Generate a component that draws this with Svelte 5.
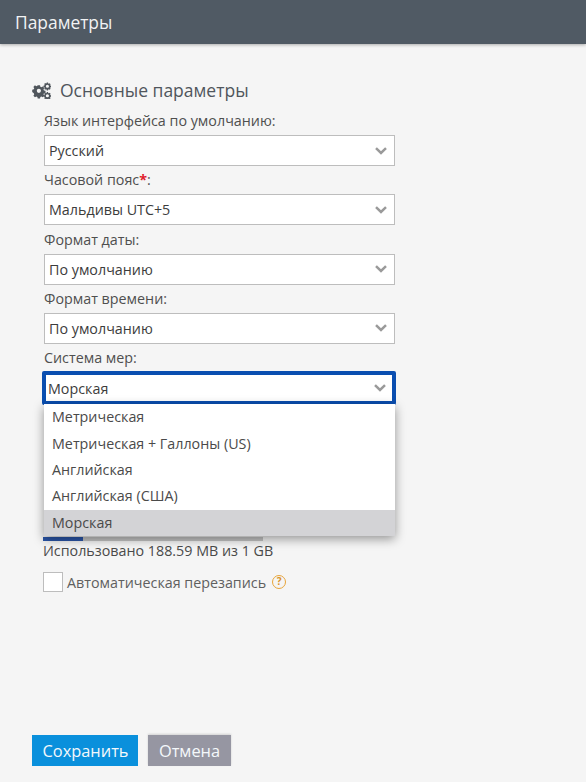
<script>
  const fields = [
    { label: 'Язык интерфейса по умолчанию:', value: 'Русский' },
    { label: 'Часовой пояс', required: true, value: 'Мальдивы UTC+5' },
    { label: 'Формат даты:', value: 'По умолчанию' },
    { label: 'Формат времени:', value: 'По умолчанию' },
    { label: 'Система мер:', value: 'Морская', open: true }
  ]
  const options = ['Метрическая', 'Метрическая + Галлоны (US)', 'Английская', 'Английская (США)', 'Морская']
</script>

<div class="page">
  <header class="topbar">Параметры</header>

  <main class="content">
    <h2 class="section-title">
      <svg class="gears" viewBox="0 0 18 16" width="19" height="17">
        <g fill="#50565c">
          <path fill-rule="evenodd" d="M5.4 3h2.2l.3 1.5 1 .4 1.3-.8 1.5 1.5-.8 1.3.4 1 1.5.3v2.2l-1.5.3-.4 1 .8 1.3-1.5 1.5-1.3-.8-1 .4-.3 1.5H5.4l-.3-1.5-1-.4-1.3.8-1.5-1.5.8-1.3-.4-1L.2 9.4V7.2l1.5-.3.4-1-.8-1.3 1.5-1.5 1.3.8 1-.4zM6.5 6.300a2 2 0 1 0 0 4 2 2 0 0 0 0-4z"/>
          <path fill-rule="evenodd" d="M14 .4h1.200l.2.9.6.3.8-.4.8.8-.4.8.3.6.9.2v1.200l-.9.2-.3.6.4.8-.8.8-.8-.4-.6.3-.2.9H14l-.2-.9-.6-.3-.8.4-.8-.8.4-.8-.3-.6-.9-.2V3.400l.9-.2.3-.6-.4-.8.8-.8.8.4.6-.3zm.6 2.100a1.500 1.500 0 1 0 0 3 1.500 1.500 0 0 0 0-3z"/>
          <path fill-rule="evenodd" d="M14 9.400h1.200l.2.9.6.3.8-.4.8.8-.4.8.3.6.9.2v1.200l-.9.2-.3.6.4.8-.8.8-.8-.4-.6.3-.2.9H14l-.2-.9-.6-.3-.8.4-.8-.8.4-.8-.3-.6-.9-.2v-1.200l.9-.2.3-.6-.4-.8.8-.8.8.4.6-.3zm.6 2.100a1.500 1.500 0 1 0 0 3 1.500 1.500 0 0 0 0-3z"/>
        </g>
      </svg>
      Основные параметры
    </h2>

    <div class="fields">
      {#each fields as f}
        <div class="field">
          <div class="label">{f.label}{#if f.required}<span class="req">*</span>:{/if}</div>
          <div class="select" class:focused={f.open}>
            <span>{f.value}</span>
            <svg class="chevron" viewBox="0 0 12 8" width="12" height="8">
              <path d="M1 1.200 6 6l5-4.800" fill="none" stroke="#9a9a9a" stroke-width="2.500"/>
            </svg>
            {#if f.open}
              <ul class="menu">
                {#each options as o}
                  <li class:active={o === f.value}>{o}</li>
                {/each}
              </ul>
            {/if}
          </div>
        </div>
      {/each}
    </div>

    <div class="storage">
      <div class="bar"><div class="bar-fill" style="width: 18.3%"></div></div>
      <div class="usage">Использовано 188.59 MB из 1 GB</div>
      <div class="check-row">
        <span class="checkbox"></span>
        <span class="check-label">Автоматическая перезапись</span>
        <span class="hint">?</span>
      </div>
    </div>
  </main>

  <footer class="actions">
    <button class="btn primary">Сохранить</button>
    <button class="btn secondary">Отмена</button>
  </footer>
</div>

<style>
  :global(body) {
    margin: 0;
    background: #f5f5f5;
  }
  .page {
    height: 782px;
    display: flex;
    flex-direction: column;
    background: #f5f5f5;
    font-family: "Open Sans", "Noto Sans", sans-serif;
    font-size: 14.3px;
    color: #4a4a4a;
    overflow: hidden;
  }
  .topbar {
    height: 44px;
    flex: none;
    box-sizing: border-box;
    padding: 0 15px;
    line-height: 45px;
    font-size: 17.4px;
    color: #f2f3f4;
    background: #505a64;
    box-shadow: 0 1px 3px rgba(0, 0, 0, 0.3);
  }
  .content {
    flex: 1;
    padding: 0 0 0 32px;
  }
  .section-title {
    display: flex;
    align-items: center;
    gap: 9px;
    margin: 33px 0 0;
    height: 26px;
    font-size: 17.5px;
    font-weight: 400;
    color: #50565c;
  }
  .gears {
    flex: none;
  }
  .fields {
    margin-top: 7px;
    padding-left: 12px;
  }
  .field {
    height: 59.3px;
  }
  .label {
    height: 25px;
    line-height: 22px;
    color: #4f4f4f;
    white-space: nowrap;
  }
  .req {
    color: #e0202a;
    font-weight: 700;
  }
  .select {
    position: relative;
    box-sizing: border-box;
    width: 351px;
    height: 31px;
    padding: 0 4px;
    display: flex;
    align-items: center;
    justify-content: space-between;
    background: #fff;
    border: 1px solid #bdbdbd;
    color: #3c3c3c;
  }
  .chevron {
    margin-right: 3px;
  }
  .focused {
    width: 354px;
    height: 34px;
    margin: -1px 0 0 -2px;
    padding: 0 2px 0 2px;
    border: 4px solid #0a4eb0;
    border-radius: 2px;
  }
  .focused .chevron {
    margin-right: 4px;
  }
  .menu {
    position: absolute;
    top: 29px;
    left: -2px;
    width: 351px;
    margin: 0;
    padding: 0;
    list-style: none;
    background: #fff;
    box-shadow: 0 3px 10px rgba(0, 0, 0, 0.4);
    z-index: 2;
  }
  .menu li {
    height: 26.4px;
    line-height: 25px;
    padding-left: 8px;
    color: #4a4a4a;
  }
  .menu li.active {
    background: #d3d3d6;
  }
  .storage {
    margin-top: 131px;
    padding-left: 11px;
  }
  .bar {
    width: 220px;
    height: 4px;
    background: #c4c4c4;
  }
  .bar-fill {
    height: 100%;
    background: #2a55a8;
  }
  .usage {
    height: 20px;
    line-height: 20px;
    color: #4a4a4a;
  }
  .check-row {
    display: flex;
    align-items: center;
    margin-top: 11px;
  }
  .checkbox {
    box-sizing: border-box;
    width: 20px;
    height: 20px;
    background: #fff;
    border: 1px solid #bdbdbd;
    margin-right: 4px;
  }
  .check-label {
    color: #5f5f5f;
  }
  .hint {
    box-sizing: border-box;
    width: 14px;
    height: 14px;
    margin-left: 6px;
    border: 1.5px solid #e8a53a;
    border-radius: 50%;
    color: #d9922a;
    font-size: 10px;
    font-weight: 700;
    line-height: 11px;
    text-align: center;
  }
  .actions {
    flex: none;
    display: flex;
    gap: 10px;
    padding: 0 0 16px 32px;
  }
  .btn {
    height: 31px;
    border: 0;
    padding: 0;
    font-family: inherit;
    font-size: 16.4px;
    color: #f4f8fb;
  }
  .primary {
    width: 106px;
    padding-left: 1px;
    background: #0a90dc;
  }
  .secondary {
    width: 83px;
    background: #9696a2;
    box-shadow: 0 -1px 2px rgba(0, 0, 0, 0.15);
  }
</style>
